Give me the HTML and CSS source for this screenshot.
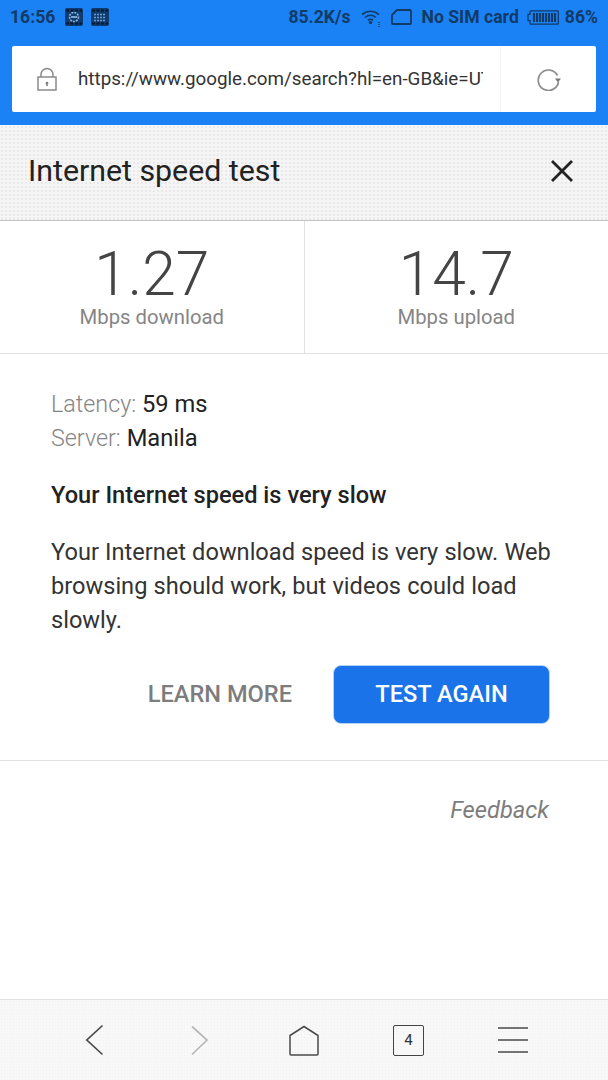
FILE: index.html
```html
<!DOCTYPE html>
<html lang="en">
<head>
<meta charset="utf-8">
<title>Internet speed test</title>
<link rel="stylesheet" href="styles.css">
</head>
<body>
<div class="phone">
  <div class="top">
    <div class="status">
      <span class="time">16:56</span>
      <svg class="chip" viewBox="0 0 18 18"><rect width="18" height="18" rx="2" fill="#0f3c70"/><path d="M1 2.500h16M1 15.500h16" stroke="#05172c" stroke-width="2" stroke-dasharray="3 1.500"/><circle cx="9" cy="9" r="4.500" fill="none" stroke="#8fb4d8" stroke-width="1.600" stroke-dasharray="2 1"/><path d="M6 9h6" stroke="#a9c8e6" stroke-width="1.500"/></svg>
      <svg class="chip chip-b" viewBox="0 0 18 18"><rect width="18" height="18" rx="2" fill="#0f3c70"/><path d="M1 2.500h16M1 15.500h16" stroke="#05172c" stroke-width="2" stroke-dasharray="3 1.500"/><path d="M3 6.500h12M3 9.500h12M3 12.500h12" stroke="#6f9ac4" stroke-width="1.300" stroke-dasharray="2 1"/></svg>
      <span class="stat-right">
        <span>85.2K/s</span>
        <svg class="wifi" viewBox="0 0 20 18"><path d="M1 5.500q8.500-6.500 17 0M4 8.500q5.500-4.500 11 0M6.800 11.300q2.700-2 5.400 0" fill="none" stroke="#123a66" stroke-width="1.600"/><circle cx="9.500" cy="13.500" r="1.700" fill="#123a66"/><path d="M18 13v5" stroke="#123a66" stroke-width="1.400" stroke-dasharray="1 1"/></svg>
        <svg class="sim" viewBox="0 0 21 16"><path d="M6 1h13a1 1 0 0 1 1 1v12a1 1 0 0 1-1 1H2a1 1 0 0 1-1-1V6z" fill="none" stroke="#123a66" stroke-width="1.800" stroke-linejoin="round"/></svg>
        <span>No SIM card</span>
        <svg class="batt" viewBox="0 0 32 15"><path d="M4 .8h26.500a.8.8 0 0 1 .8.8v11.800a.8.8 0 0 1-.8.800H4a1 1 0 0 1-1-1v-2.500H1V4.300h2V1.800a1 1 0 0 1 1-1z" fill="none" stroke="#123a66" stroke-width="1.300"/><path d="M7 3v9M10 3v9M13 3v9M16 3v9M19 3v9M22 3v9M25 3v9M28 3v9" stroke="#123a66" stroke-width="2.100"/></svg>
        <span>86%</span>
      </span>
    </div>
    <div class="urlbar">
      <div class="url-main">
        <svg class="lock" viewBox="0 0 20 24"><path d="M4 10V7.500a6 6 0 0 1 12 0V10" fill="none" stroke="#8a8a8a" stroke-width="1.500"/><rect x="1" y="10" width="18" height="13" fill="none" stroke="#8a8a8a" stroke-width="1.500"/><path d="M10 15v4" stroke="#777" stroke-width="1.500"/><path d="M8 16.500l2-2 2 2z" fill="#777"/></svg>
        <span class="url">https://www.google.com/search?hl=en-GB&amp;ie=UTF-8</span>
      </div>
      <div class="url-reload">
        <svg class="reload" viewBox="0 0 24 24"><path d="M20.500 8.500A10.200 10.200 0 1 0 21.500 15" fill="none" stroke="#8f8f8f" stroke-width="1.700"/><path d="M18 11.500h6l-3 4z" fill="#777"/></svg>
      </div>
    </div>
  </div>

  <header class="head">
    <h1>Internet speed test</h1>
    <svg class="close" viewBox="0 0 24 24"><path d="M2 2l20 20M22 2L2 22" stroke="#222" stroke-width="2.800" fill="none"/></svg>
  </header>

  <section class="results">
    <div class="result"><div class="num">1.27</div><div class="unit">Mbps download</div></div>
    <div class="result"><div class="num">14.7</div><div class="unit">Mbps upload</div></div>
  </section>

  <section class="body">
    <p class="meta"><span class="lab">Latency:</span> 59 ms</p>
    <p class="meta"><span class="lab">Server:</span> Manila</p>
    <h2>Your Internet speed is very slow</h2>
    <p class="desc">Your Internet download speed is very slow. Web browsing should work, but videos could load slowly.</p>
    <div class="actions">
      <span class="learn">LEARN MORE</span>
      <span class="again">TEST AGAIN</span>
    </div>
  </section>

  <div class="feedback"><span>Feedback</span></div>

  <nav class="nav">
    <svg class="nav-i" viewBox="0 0 36 36"><path d="M26.500 3.500L10.800 18 26.500 32.500" fill="none" stroke="#4a4a4a" stroke-width="1.700"/></svg>
    <svg class="nav-i" viewBox="0 0 36 36"><path d="M11 4.500L26 18 11 32.500" fill="none" stroke="#b8b8b8" stroke-width="1.700"/></svg>
    <svg class="nav-i" viewBox="0 0 36 36"><path d="M18 4.500L32 13.500V32a1 1 0 0 1-1 1H5a1 1 0 0 1-1-1V13.500z" fill="none" stroke="#4a4a4a" stroke-width="1.500" stroke-linejoin="round"/></svg>
    <span class="tabs">4</span>
    <svg class="nav-i" viewBox="0 0 36 36"><path d="M3 6h30M3 18h30M3 30h30" stroke="#4a4a4a" stroke-width="1.700"/></svg>
  </nav>
</div>
</body>
</html>
```
FILE: styles.css
```css
* { box-sizing: border-box; }
html, body { margin: 0; padding: 0; }
body { font-family: Roboto, "Liberation Sans", sans-serif; background: #fff; }
.phone { width: 608px; height: 1080px; display: flex; flex-direction: column; overflow: hidden; }

.top { background: #1a82f5; height: 125px; padding: 0 12px; }
.status { height: 46px; padding-top: 4px; display: flex; align-items: flex-start; font-size: 17.6px; font-weight: 700; color: #123a66; line-height: 26px; }
.time { margin-right: 10px; margin-left: -2px; }
.chip { width: 18px; height: 18px; margin-top: 4px; }
.chip-b { margin-left: 8px; }
.stat-right { margin-left: auto; margin-right: -2px; display: flex; align-items: center; gap: 10px; height: 26px; }
.wifi { width: 20px; height: 18px; margin-top: 2px; }
.sim { width: 21px; height: 16px; }
.batt { width: 32px; height: 15px; margin: 0 -4px 0 -2px; }

.urlbar { width: 584px; height: 66px; background: #fff; border-radius: 2px; display: flex; }
.url-main { flex: 1; min-width: 0; display: flex; align-items: center; padding-left: 25px; border-right: 1px solid #f4f4f4; }
.lock { width: 20px; height: 24px; flex: none; }
.url { margin-left: 21px; font-size: 18.8px; color: #333; white-space: nowrap; overflow: hidden; width: 405px; }
.url-reload { width: 95px; display: flex; align-items: center; justify-content: center; }
.reload { width: 24px; height: 24px; }

.head { height: 96px; background-color: #f5f5f5; background-image: radial-gradient(#e9e9e9 .8px, transparent 1px); background-size: 4px 4px; border-bottom: 1px solid #c4c4c4; display: flex; align-items: center; justify-content: space-between; padding: 0 34px 4px 28px; }
h1 { margin: 0; font-size: 30.300px; font-weight: 400; color: #222; }
.close { width: 24px; height: 24px; }

.results { display: flex; height: 133px; border-bottom: 1px solid #e2e2e2; }
.result { flex: 1; text-align: center; padding-top: 23px; }
.result + .result { border-left: 1px solid #e2e2e2; }
.num { font-size: 60.500px; font-weight: 300; color: #444; line-height: 61px; height: 61px; padding-top: 0; }
.unit { font-size: 20.300px; color: #858585; line-height: 24px; }

.body { padding: 33px 51px 0; height: 407px; border-bottom: 1px solid #e2e2e2; color: #222; }
.meta { margin: 0; font-size: 23.700px; line-height: 34px; }
.lab { color: #858585; font-weight: 300; font-size: 23.300px; }
h2 { margin: 23px 0 0; font-size: 23.600px; font-weight: 500; line-height: 34px; }
.desc { margin: 23px 0 0; font-size: 23.600px; word-spacing: .3px; line-height: 34px; color: #333; }
.actions { margin-top: 28px; display: flex; justify-content: flex-end; align-items: center; gap: 41px; margin-right: 7px; }
.learn { font-size: 23.600px; font-weight: 500; color: #7d7d7d; margin-bottom: 2px; }
.again { width: 217px; height: 59px; padding-bottom: 2px; background: #1a73e8; border: 1px solid #b5d3f5; border-radius: 8px; color: #fff; font-size: 23.600px; font-weight: 500; display: flex; align-items: center; justify-content: center; }

.feedback { flex: 1; padding: 35px 59px 0; text-align: right; font-size: 23.700px; font-style: italic; color: #7d7d7d; }

.nav { height: 81px; background-color: #f8f8f8; background-image: radial-gradient(#f1f1f1 .7px, transparent .8px); background-size: 3px 3px; border-top: 1px solid #e2e2e2; display: flex; align-items: center; padding-left: 76px; gap: 69px; }
.nav-i { width: 36px; height: 36px; flex: none; }
.tabs { width: 31px; height: 31px; margin: 0 2px; border: 1.500px solid #444; border-radius: 2px; display: flex; align-items: center; justify-content: center; font-size: 15px; color: #333; flex: none; }
```
